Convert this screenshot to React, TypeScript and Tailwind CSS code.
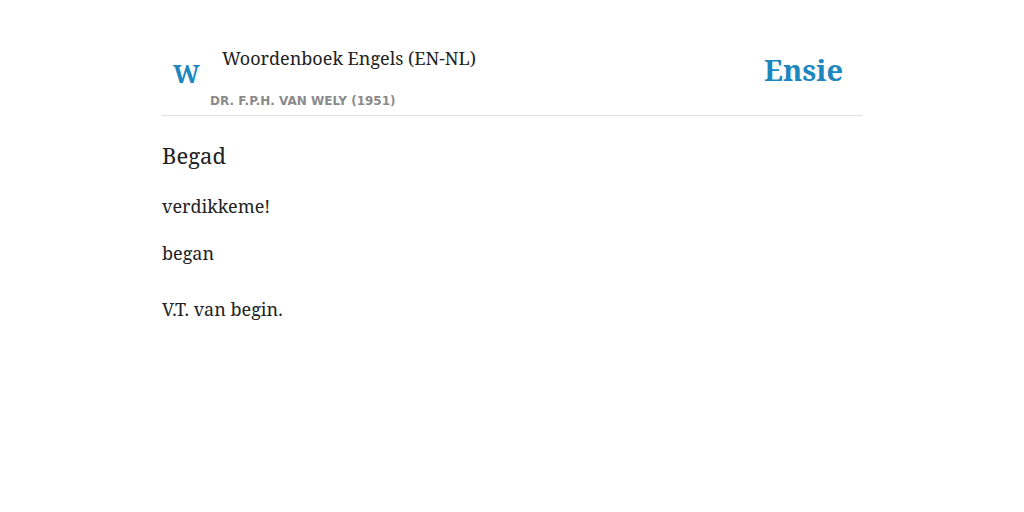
import React from "react";

const serif = { fontFamily: '"Noto Serif", "DejaVu Serif", "Liberation Serif", serif' };

const App = () => {
  return (
    <div className="min-h-screen bg-white" style={serif}>
      <div className="mx-auto w-[700px] pt-[42px]">
        {/* Header */}
        <header className="flex justify-between border-b border-[#dddddd] h-[74px]">
          <div className="flex">
            <div className="w-[60px] pl-[11px] pt-[15px] text-[#1e87c0] text-[25px] font-bold leading-[32px]">
              W
            </div>
            <div className="flex flex-col">
              <h1 className="text-[18px] leading-[32px] text-[#222]">
                Woordenboek Engels (EN-NL)
              </h1>
              <p className="-ml-[12px] mt-[20px] text-[12px] leading-[14px] font-bold text-[#8a8a8a] font-['DejaVu_Sans',sans-serif]">
                DR. F.P.H. VAN WELY (1951)
              </p>
            </div>
          </div>
          <div className="pr-[19px] pt-[8px] text-[29px] font-bold text-[#1e87c0] leading-[40px]">
            Ensie
          </div>
        </header>

        {/* Entry */}
        <main className="pt-[23px] text-[#222]">
          <h2 className="text-[22px] leading-[32px]">Begad</h2>
          <p className="mt-[21px] text-[18px] leading-[28px]">verdikkeme!</p>
          <p className="mt-[19px] text-[18px] leading-[28px]">began</p>
          <p className="mt-[28px] text-[18px] leading-[28px]">V.T. van begin.</p>
        </main>
      </div>
    </div>
  );
};

export default App;
